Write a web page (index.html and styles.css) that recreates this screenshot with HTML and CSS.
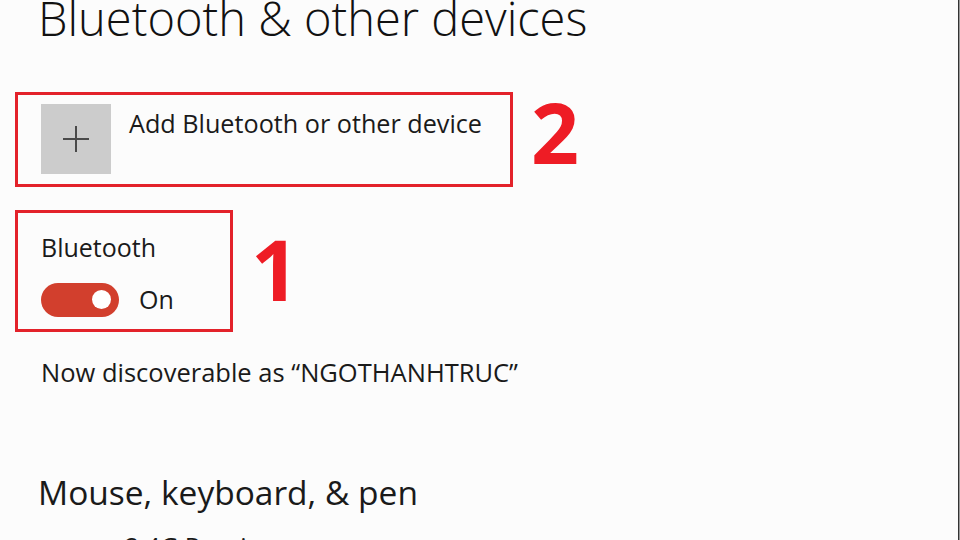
FILE: index.html
```html
<!DOCTYPE html>
<html lang="en">
<head>
<meta charset="UTF-8" />
<meta name="viewport" content="width=device-width, initial-scale=1" />
<title>Bluetooth &amp; other devices</title>
<link rel="stylesheet" href="styles.css">
</head>
<body>
  <div class="settings-page">
    <h1 class="page-title">Bluetooth &amp; other devices</h1>

    <!-- Add device button, marked as step 2 -->
    <div class="marked-row">
      <div class="mark-box add-box">
        <div class="add-tile">
          <svg viewBox="0 0 26 26" aria-hidden="true">
            <line x1="0" y1="13" x2="26" y2="13" />
            <line x1="13" y1="0" x2="13" y2="26" />
          </svg>
        </div>
        <span class="add-label">Add Bluetooth or other device</span>
      </div>
      <span class="step-num step-two">2</span>
    </div>

    <!-- Bluetooth switch, marked as step 1 -->
    <div class="marked-row">
      <div class="mark-box toggle-box">
        <span class="field-label">Bluetooth</span>
        <div class="toggle-line">
          <span class="toggle on"><span class="knob"></span></span>
          <span class="toggle-state">On</span>
        </div>
      </div>
      <span class="step-num step-one">1</span>
    </div>

    <p class="discover-note">Now discoverable as “NGOTHANHTRUC”</p>

    <h2 class="section-title">Mouse, keyboard, &amp; pen</h2>
    <div class="device-item">2.4G Receiver</div>
  </div>
</body>
</html>
```

FILE: styles.css
```css
html, body {
  margin: 0;
  height: 100%;
  overflow: hidden;
}

body {
  background: #fcfcfc;
  font-family: "Open Sans", "Noto Sans", sans-serif;
  color: #1a1a1a;
}

.settings-page {
  box-sizing: border-box;
  width: 959px;
  height: 100%;
  padding-left: 15px;
  border-right: 1px solid #333;
  box-shadow: 1px 0 0 #9a9a9a;
  display: flex;
  flex-direction: column;
  align-items: flex-start;
}

.page-title {
  margin: 0 0 0 23px;
  font-size: 47px;
  font-weight: 300;
  line-height: 0.8;
  color: #111;
}

.marked-row {
  display: flex;
  align-items: flex-start;
}

.mark-box {
  border: 3px solid #e3222a;
}

/* add device */
.add-box {
  margin-top: 54px;
  width: 469px;
  height: 80px;
  padding: 9px 0 0 23px;
  display: flex;
  align-items: flex-start;
  gap: 18px;
}

.add-tile {
  width: 70px;
  height: 70px;
  background: #cccccc;
  display: flex;
  align-items: center;
  justify-content: center;
}

.add-tile svg {
  width: 26px;
  height: 26px;
}

.add-tile line {
  stroke: #4a4a4a;
  stroke-width: 2;
}

.add-label {
  margin-top: 7px;
  font-size: 25.2px;
  line-height: 1;
}

.step-num {
  color: #ee1c25;
  font-weight: 700;
  font-size: 84px;
  line-height: 1;
}

.step-two {
  margin: 52px 0 0 18px;
}

/* bluetooth toggle */
.toggle-box {
  margin-top: 23px;
  width: 189px;
  height: 107px;
  padding: 9px 0 0 23px;
  display: flex;
  flex-direction: column;
  align-items: flex-start;
}

.field-label {
  font-size: 25px;
  line-height: 1;
  margin-top: 13px;
}

.toggle-line {
  display: flex;
  align-items: center;
  gap: 20px;
  margin-top: 23px;
}

.toggle {
  width: 78px;
  height: 34px;
  border-radius: 17px;
  background: #d23f2d;
  display: flex;
  align-items: center;
  justify-content: flex-end;
  padding-right: 8px;
  box-sizing: border-box;
}

.knob {
  width: 19px;
  height: 19px;
  border-radius: 50%;
  background: #fff;
}

.toggle-state {
  font-size: 25px;
  line-height: 1;
}

.step-one {
  margin: 40px 0 0 18px;
}

.discover-note {
  margin: 28px 0 0 26px;
  font-size: 25.5px;
  line-height: 1;
}

.section-title {
  margin: 91px 0 0 23px;
  font-size: 33.5px;
  font-weight: 400;
  line-height: 1;
}

.device-item {
  margin: 24px 0 0 110px;
  font-size: 25px;
  line-height: 1;
}
```
